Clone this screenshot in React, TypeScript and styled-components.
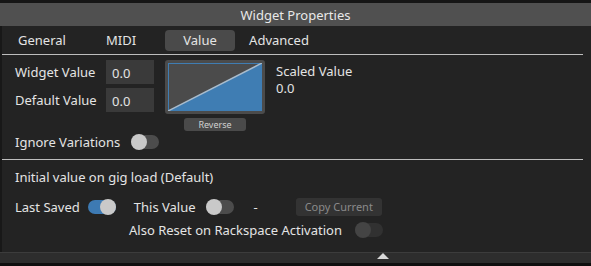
import React, { useState } from 'react'
import styled, { createGlobalStyle } from 'styled-components'

const GlobalStyle = createGlobalStyle`
  html, body {
    margin: 0;
    padding: 0;
    background: #111111;
  }
  * {
    box-sizing: border-box;
  }
`

const Frame = styled.div`
  width: 591px;
  height: 266px;
  display: flex;
  flex-direction: column;
  font-family: 'Noto Sans', 'Liberation Sans', sans-serif;
  font-size: 13px;
  color: #e4e4e4;
  overflow: hidden;
`

const TopStrip = styled.div`
  height: 3px;
  background: #161616;
`

const TitleBar = styled.div`
  height: 23px;
  background: #505050;
  display: flex;
  align-items: center;
  justify-content: center;
  color: #e8e8e8;
`

const Panel = styled.div`
  flex: 1;
  background: #232323;
  border-left: 2px solid #181818;
  display: flex;
  flex-direction: column;
`

const TabBar = styled.div`
  height: 28px;
  display: flex;
  align-items: center;
  gap: 9px;
  padding-left: 5px;
`

const Tab = styled.div<{ active?: boolean }>`
  width: 70px;
  height: 21px;
  border-radius: 4px;
  display: flex;
  align-items: center;
  justify-content: center;
  background: ${({ active }) => (active ? '#4a4a4a' : 'transparent')};
  color: #e4e4e4;
  cursor: pointer;
`

const Rule = styled.div<{ top?: number }>`
  height: 1px;
  margin-top: ${({ top }) => top ?? 0}px;
  margin-right: 8px;
  background: #bdbdbd;
`

const Section = styled.div<{ top: number }>`
  display: flex;
  flex-direction: column;
  padding: ${({ top }) => top}px 0 0 13px;
`

const TopRow = styled.div`
  display: flex;
  gap: 11px;
`

const Fields = styled.div`
  display: flex;
  flex-direction: column;
  gap: 4px;
`

const FieldRow = styled.div`
  display: flex;
  align-items: center;
`

const FieldLabel = styled.span`
  width: 91px;
`

const ValueBox = styled.div`
  width: 48px;
  height: 24px;
  background: #3a3a3a;
  display: flex;
  align-items: center;
  padding-left: 6px;
  padding-top: 2px;
`

const CurveColumn = styled.div`
  display: flex;
  flex-direction: column;
  align-items: center;
  gap: 4px;
`

const CurveFrame = styled.div`
  width: 100px;
  height: 54px;
  border: 3px solid #4b4b4b;
  border-radius: 3px;
  background: #4b4b4b;
  display: flex;
`

const SmallButton = styled.div<{ dim?: boolean }>`
  height: ${({ dim }) => (dim ? '18px' : '13px')};
  padding: 0 ${({ dim }) => (dim ? '8px' : '0')};
  width: ${({ dim }) => (dim ? '86px' : '62px')};
  border-radius: 3px;
  background: ${({ dim }) => (dim ? '#333333' : '#4a4a4a')};
  color: ${({ dim }) => (dim ? '#8a8a8a' : '#d0d0d0')};
  font-size: ${({ dim }) => (dim ? '11px' : '9px')};
  display: flex;
  align-items: center;
  justify-content: center;
`

const Scaled = styled.div`
  display: flex;
  flex-direction: column;
  padding-top: 3px;
  line-height: 17px;
`

const Line = styled.div<{ h: number; top?: number; indent?: number }>`
  display: flex;
  align-items: center;
  height: ${({ h }) => h}px;
  margin-top: ${({ top }) => top ?? 0}px;
  padding-left: ${({ indent }) => indent ?? 0}px;
`

const Track = styled.div<{ on?: boolean; faint?: boolean }>`
  width: 28px;
  height: 14px;
  border-radius: 7px;
  background: ${({ on, faint }) => (on ? '#3d7ab3' : faint ? '#313131' : '#4c4c4c')};
  display: flex;
  justify-content: ${({ on }) => (on ? 'flex-end' : 'flex-start')};
`

const Knob = styled.div<{ faint?: boolean }>`
  width: 16px;
  height: 16px;
  margin-top: -1px;
  border-radius: 50%;
  background: ${({ faint }) => (faint ? '#444444' : '#c9c9c9')};
`

const Spacer = styled.div<{ w: number }>`
  width: ${({ w }) => w}px;
  flex-shrink: 0;
`

const BottomBar = styled.div`
  height: 11px;
  background: #2d2d2d;
  border-top: 1px solid #3c3c3c;
  display: flex;
  align-items: flex-start;
  padding-left: 377px;
`

const BlackStrip = styled.div`
  height: 3px;
  background: #0f0f0f;
`

function Toggle({ on, faint }: { on?: boolean; faint?: boolean }) {
  return (
    <Track on={on} faint={faint}>
      <Knob faint={faint} />
    </Track>
  )
}

export default function App() {
  const [tab, setTab] = useState('Value')
  const tabs = ['General', 'MIDI', 'Value', 'Advanced']

  return (
    <Frame>
      <GlobalStyle />
      <TopStrip />
      <TitleBar>Widget Properties</TitleBar>
      <Panel>
        <TabBar>
          {tabs.map((t) => (
            <Tab key={t} active={t === tab} onClick={() => setTab(t)}>
              {t}
            </Tab>
          ))}
        </TabBar>
        <Rule />

        <Section top={5}>
          <TopRow>
            <Fields>
              <FieldRow>
                <FieldLabel>Widget Value</FieldLabel>
                <ValueBox>0.0</ValueBox>
              </FieldRow>
              <FieldRow>
                <FieldLabel>Default Value</FieldLabel>
                <ValueBox>0.0</ValueBox>
              </FieldRow>
            </Fields>
            <CurveColumn>
              <CurveFrame>
                <svg width="94" height="48" viewBox="0 0 94 48">
                  <rect x="0" y="0" width="94" height="48" fill="#4b4b4b" />
                  <polygon points="0,48 94,0 94,48" fill="#3f7db3" />
                  <rect x="0.5" y="0.5" width="93" height="47" fill="none" stroke="#3f7db3" />
                  <line x1="0" y1="48" x2="94" y2="0" stroke="#a9bccd" strokeWidth="1.5" />
                </svg>
              </CurveFrame>
              <SmallButton>Reverse</SmallButton>
            </CurveColumn>
            <Scaled>
              <span>Scaled Value</span>
              <span>0.0</span>
            </Scaled>
          </TopRow>
          <Line h={20} top={1}>
            <span>Ignore Variations</span>
            <Spacer w={11} />
            <Toggle />
          </Line>
        </Section>

        <Rule top={7} />

        <Section top={7}>
          <Line h={19}>Initial value on gig load (Default)</Line>
          <Line h={23} top={9}>
            <span>Last Saved</span>
            <Spacer w={8} />
            <Toggle on />
            <Spacer w={18} />
            <span>This Value</span>
            <Spacer w={10} />
            <Toggle />
            <Spacer w={20} />
            <span>-</span>
            <Spacer w={38} />
            <SmallButton dim>Copy Current</SmallButton>
          </Line>
          <Line h={20} top={2} indent={114}>
            <span>Also Reset on Rackspace Activation</span>
            <Spacer w={13} />
            <Toggle faint />
          </Line>
        </Section>
      </Panel>
      <BottomBar>
        <svg width="12" height="6" viewBox="0 0 12 6">
          <polygon points="0,6 6,0 12,6" fill="#d8d8d8" />
        </svg>
      </BottomBar>
      <BlackStrip />
    </Frame>
  )
}
